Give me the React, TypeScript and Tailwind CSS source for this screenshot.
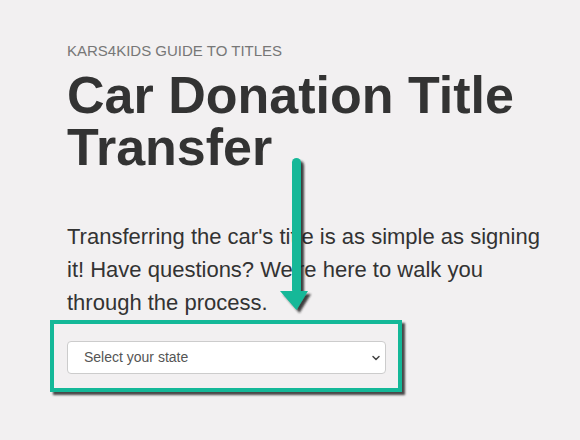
import { ChevronDown } from "lucide-react";

// Teal call-out arrow pointing down at the state picker
const CalloutArrow = () => (
  <svg
    className="absolute left-[276px] top-[152px]"
    width="40"
    height="166"
    viewBox="0 0 40 166"
  >
    <defs>
      <filter id="arrowShadow" x="-50%" y="-10%" width="200%" height="130%">
        <feDropShadow dx="3" dy="3" stdDeviation="1.2" floodColor="#222" floodOpacity="0.85" />
      </filter>
    </defs>
    <g filter="url(#arrowShadow)" fill="#14b898">
      <rect x="16" y="6" width="9" height="136" rx="4.5" />
      <polygon points="4,139 32,139 20.5,158" />
    </g>
  </svg>
);

const StatePicker = () => (
  <div className="relative w-[319px]">
    <select
      defaultValue=""
      className="block h-[33px] w-full appearance-none rounded-[4px] border border-[#ccc] bg-white pl-[16px] text-[14px] text-[#555] outline-none"
    >
      <option value="">Select your state</option>
    </select>
    <ChevronDown
      className="pointer-events-none absolute right-[4px] top-[11px] h-[12px] w-[12px] text-[#444]"
      strokeWidth={3}
    />
    {/* highlight frame around the picker */}
    <div className="pointer-events-none absolute -left-[17px] -right-[16px] -top-[21px] -bottom-[18px] border-4 border-[#14b898] shadow-[3px_3px_2px_rgba(30,30,30,0.8)]" />
  </div>
);

export default function App() {
  return (
    <div className="relative min-h-screen bg-[#f2f0f1] font-['Liberation_Sans',Arial,sans-serif] text-[#333]">
      <div className="flex w-[484px] flex-col box-content pl-[67px] pt-[42px]">
        <p className="text-[15px] leading-[18px] text-[#777]">KARS4KIDS GUIDE TO TITLES</p>
        <h1 className="mt-[9px] text-[52px] font-bold leading-[52px] text-[#333]">
          Car Donation Title Transfer
        </h1>
        <p className="mt-[47px] text-[22px] leading-[33px]">
          Transferring the car's title is as simple as signing it! Have questions? We're here to
          walk you through the process.
        </p>
        <div className="mt-[22px]">
          <StatePicker />
        </div>
      </div>

      <CalloutArrow />
    </div>
  );
}
